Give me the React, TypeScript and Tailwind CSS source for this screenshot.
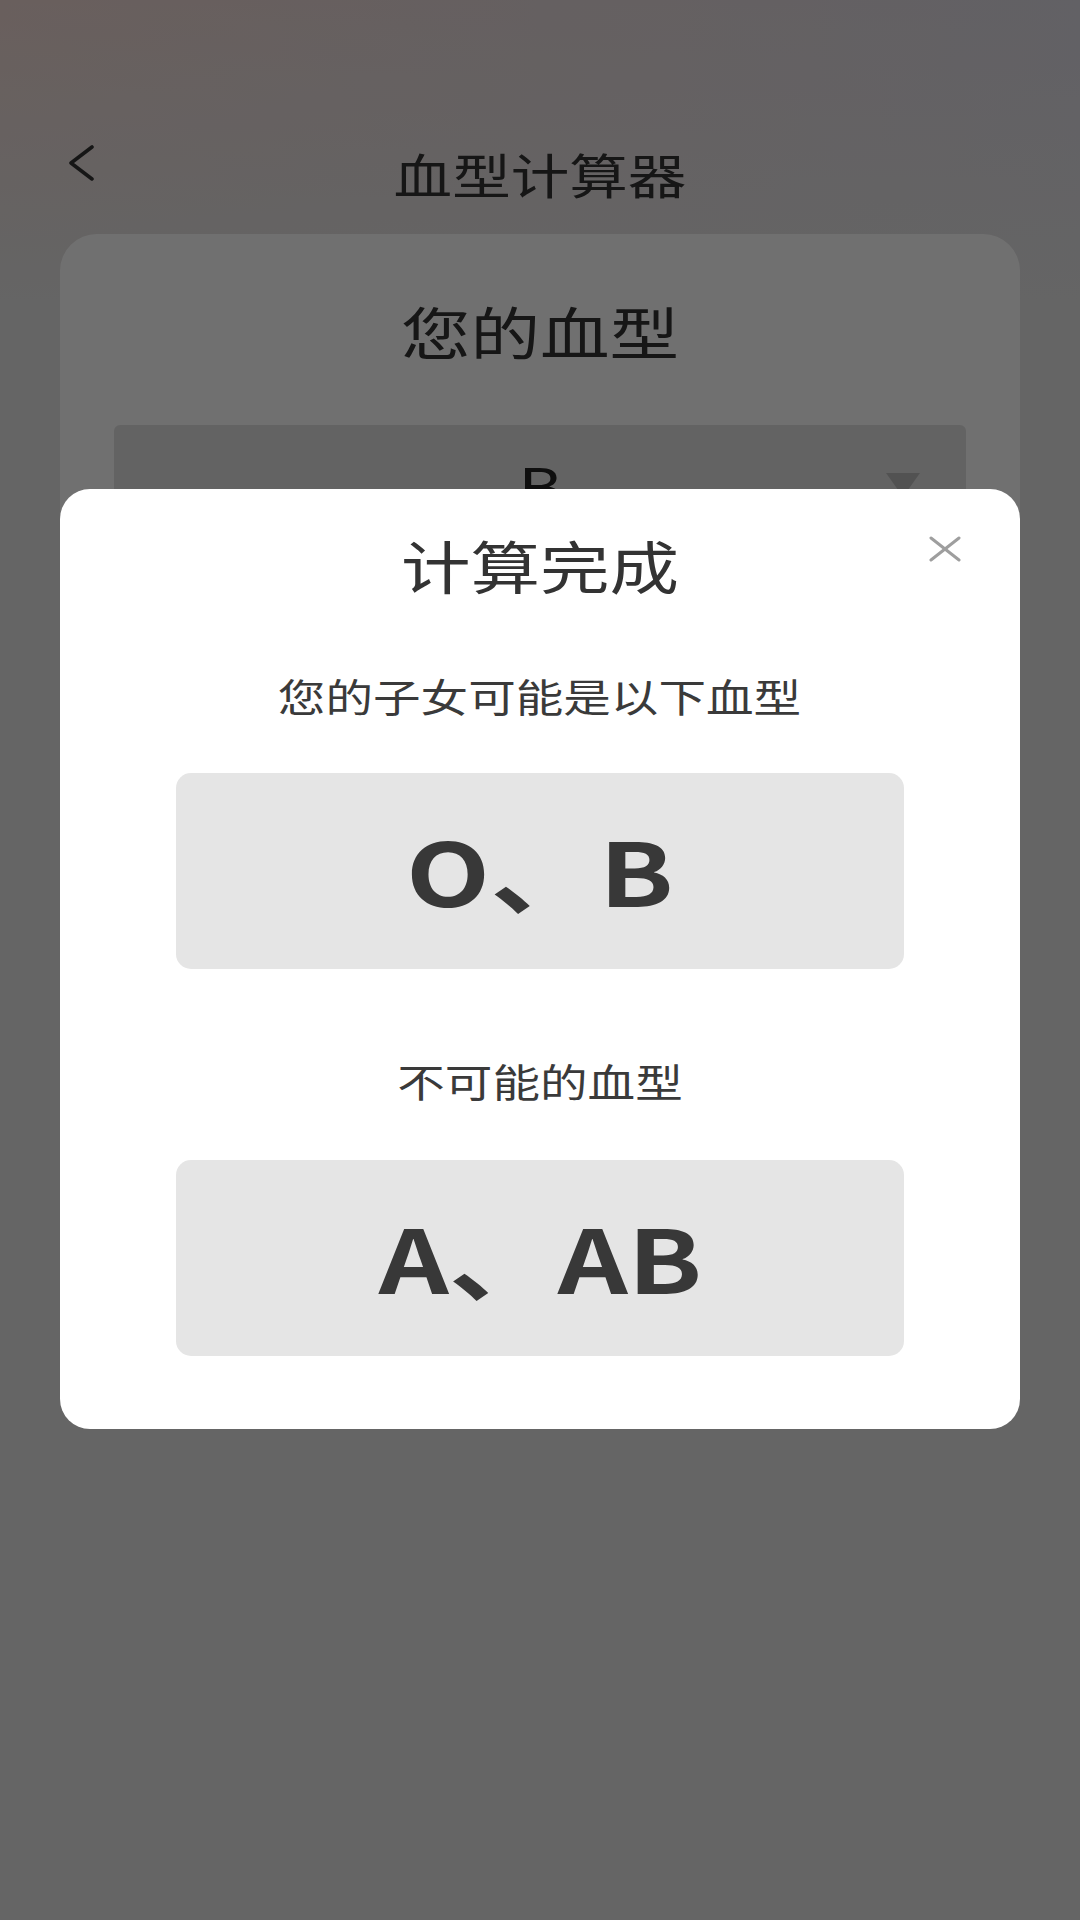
import { useState } from "react";

const font = { fontFamily: '"Noto Sans CJK SC", "Noto Sans", sans-serif' };

function BackArrow() {
  return (
    <svg width="26" height="36" viewBox="0 0 26 36" fill="none" className="-mt-[20px]">
      <polyline
        points="23,2 2,18 23,34"
        stroke="#333"
        strokeWidth="3.6"
        strokeLinecap="round"
        strokeLinejoin="round"
      />
    </svg>
  );
}

function CloseIcon() {
  return (
    <svg width="32" height="26" viewBox="0 0 32 26" fill="none">
      <line x1="2" y1="2" x2="30" y2="24" stroke="#9e9e9e" strokeWidth="3" strokeLinecap="round" />
      <line x1="30" y1="2" x2="2" y2="24" stroke="#9e9e9e" strokeWidth="3" strokeLinecap="round" />
    </svg>
  );
}

function Select({ value }: { value: string }) {
  return (
    <div className="relative mx-[54px] flex h-[120px] items-center justify-center rounded-[6px] bg-[#e2e2e2] text-[56px] leading-none text-[#222]">
      <span className="inline-block scale-x-[1.2]">{value}</span>
      <span className="absolute right-[46px] top-[48px] h-0 w-0 border-x-[17px] border-t-[24px] border-x-transparent border-t-[#bcbcbc]" />
    </div>
  );
}

function ResultBox({ text }: { text: string }) {
  return (
    <div className="mx-[116px] flex h-[196px] items-center justify-center rounded-[15px] bg-[#e5e5e5] text-[88px] font-bold leading-none text-[#383838]">
      <span className="-mt-[4px] inline-block scale-x-[1.24]">{text}</span>
    </div>
  );
}

export default function App() {
  const [open, setOpen] = useState(true);

  return (
    <div
      className="relative h-[1920px] w-full overflow-hidden bg-[#e5e5e5] bg-[linear-gradient(180deg,transparent_0px,#e5e5e5_300px),linear-gradient(90deg,#efd8d3,#dfdce5)]"
      style={font}
    >
      <header className="mt-[125px] flex h-24 items-center px-[69px]">
        <div className="w-[26px]">
          <BackArrow />
        </div>
        <h1 className="flex-1 text-center text-[48px] font-normal leading-[48px] text-[#333]">
          <span className="inline-block scale-x-[1.22]">血型计算器</span>
        </h1>
        <div className="w-[26px]" />
      </header>

      <section className="mx-[60px] mt-[13px] h-[1040px] rounded-[37px] bg-white pt-[68px]">
        <h2 className="text-center text-[57px] leading-[57px] text-[#333]">
          <span className="inline-block scale-x-[1.22]">您的血型</span>
        </h2>
        <div className="mt-[66px]">
          <Select value="B" />
        </div>
        <h2 className="mt-[70px] text-center text-[57px] leading-[57px] text-[#333]">
          <span className="inline-block scale-x-[1.22]">配偶血型</span>
        </h2>
        <div className="mt-[66px]">
          <Select value="O" />
        </div>
        <div className="mx-[54px] mt-[120px] flex h-[130px] items-center justify-center rounded-full bg-[#e84c4c] text-[48px] leading-none text-white">
          <span className="inline-block scale-x-[1.2]">开始计算</span>
        </div>
      </section>

      {open ? (
        <div className="absolute inset-0 bg-black/[0.56] px-[60px] pt-[489px]">
          <div className="relative rounded-[30px] bg-white pb-[73px] pt-[47px]">
            <button
              type="button"
              onClick={() => setOpen(false)}
              className="absolute right-[59px] top-[47px]"
            >
              <CloseIcon />
            </button>
            <h3 className="text-center text-[57px] leading-[57px] text-[#333]">
              <span className="inline-block scale-x-[1.22]">计算完成</span>
            </h3>
            <p className="mt-[82px] text-center text-[39px] leading-[40px] text-[#3a3a3a]">
              <span className="inline-block scale-x-[1.22]">您的子女可能是以下血型</span>
            </p>
            <div className="mt-[58px]">
              <ResultBox text="O、B" />
            </div>
            <p className="mt-[91px] text-center text-[39px] leading-[40px] text-[#3a3a3a]">
              <span className="inline-block scale-x-[1.22]">不可能的血型</span>
            </p>
            <div className="mt-[60px]">
              <ResultBox text="A、AB" />
            </div>
          </div>
        </div>
      ) : null}
    </div>
  );
}
